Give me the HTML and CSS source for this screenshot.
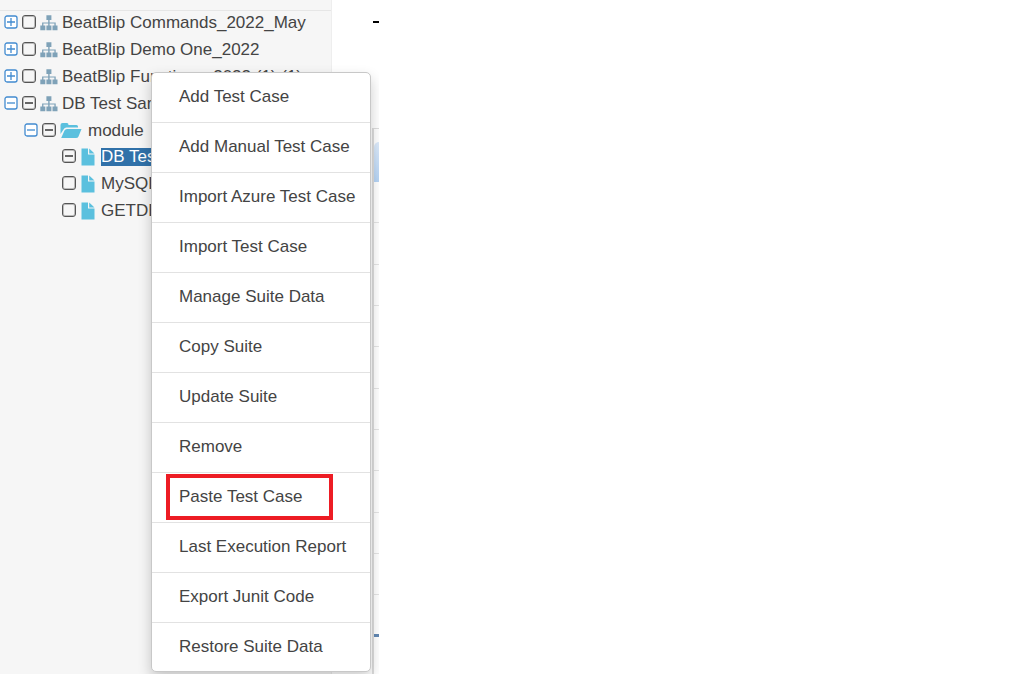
FILE: index.html
```html
<!DOCTYPE html>
<html lang="en">
<head>
<meta charset="utf-8">
<title>BeatBlip</title>
<link rel="stylesheet" href="styles.css">
</head>
<body>
<svg class="defs" aria-hidden="true">
  <symbol id="plus" viewBox="0 0 14 14"><rect x="1" y="1" width="12" height="12" rx="2"/><path d="M7 3v8M3 7h8"/></symbol>
  <symbol id="minus" viewBox="0 0 14 14"><rect x="1" y="1" width="12" height="12" rx="2"/><path d="M3 7h8"/></symbol>
  <symbol id="sitemap" viewBox="0 0 18 16"><path d="M6.4.3h5v4.8H9.600v2.300h6.100v3.200h1.800v4.700h-5v-4.700h1.900V8.500H9.600v2.100h1.800v4.700h-5v-4.700h1.800V8.500H3.400v2.100h1.900v4.700h-5v-4.700h1.800V7.400h6.100V5.100H6.400z"/></symbol>
  <symbol id="folder" viewBox="0 0 22 17"><path d="M.5 12V3Q.5 1 2.5 1H7Q8.500 1 8.500 3H16.500Q18 3 18 4.500V5.500H6.500Q4.500 5.500 3.500 7.500zM7 7H21.500L18.500 14.500Q17.800 16 16 16H1.200L4.500 8.500Q5.200 7 7 7z"/></symbol>
  <symbol id="file" viewBox="0 0 14 18"><path d="M.5.5H7V6.500H13.500V17.500H.5zM8.200.5L13.500 5.500H8.200z"/></symbol>
</svg>
<div class="app">
  <nav class="sidebar" aria-label="Projects">
    <div class="sidebar-head"></div>
    <ul class="tree">
      <li><div class="row"><button class="toggle" aria-label="Expand"><svg><use href="#plus"/></svg></button><label class="node"><input type="checkbox"><svg class="site"><use href="#sitemap"/></svg><span>BeatBlip Commands_2022_May</span></label></div></li>
      <li><div class="row"><button class="toggle" aria-label="Expand"><svg><use href="#plus"/></svg></button><label class="node"><input type="checkbox"><svg class="site"><use href="#sitemap"/></svg><span>BeatBlip Demo One_2022</span></label></div></li>
      <li><div class="row"><button class="toggle" aria-label="Expand"><svg><use href="#plus"/></svg></button><label class="node"><input type="checkbox"><svg class="site"><use href="#sitemap"/></svg><span>BeatBlip Functions_2022 (1) (1)</span></label></div></li>
      <li><div class="row"><button class="toggle" aria-label="Collapse"><svg><use href="#minus"/></svg></button><label class="node"><input class="partial" type="checkbox"><svg class="site"><use href="#sitemap"/></svg><span>DB Test Sample</span></label></div>
        <ul class="branch">
          <li><div class="row"><button class="toggle" aria-label="Collapse"><svg><use href="#minus"/></svg></button><label class="node"><input class="partial" type="checkbox"><svg class="folder"><use href="#folder"/></svg><span>module</span></label></div>
            <ul class="leaves">
              <li><div class="row"><label class="node"><input class="partial" type="checkbox"><svg class="file"><use href="#file"/></svg><span class="selected">DB Test</span></label></div></li>
              <li><div class="row"><label class="node"><input type="checkbox"><svg class="file"><use href="#file"/></svg><span>MySQL</span></label></div></li>
              <li><div class="row"><label class="node"><input type="checkbox"><svg class="file"><use href="#file"/></svg><span>GETDB</span></label></div></li>
            </ul>
          </li>
        </ul>
      </li>
    </ul>
  </nav>
  <main class="content">
    <div class="title-mark"></div>
    <div class="panel">
      <div class="tab"></div>
      <div class="line"></div><div class="line"></div><div class="line"></div><div class="line"></div><div class="line"></div>
      <div class="line"></div><div class="line"></div><div class="line"></div><div class="line"></div><div class="line"></div>
      <div class="line accent"></div>
    </div>
  </main>
  <div class="menu" role="menu">
    <button role="menuitem">Add Test Case</button>
    <button role="menuitem">Add Manual Test Case</button>
    <button role="menuitem">Import Azure Test Case</button>
    <button role="menuitem">Import Test Case</button>
    <button role="menuitem">Manage Suite Data</button>
    <button role="menuitem">Copy Suite</button>
    <button role="menuitem">Update Suite</button>
    <button role="menuitem">Remove</button>
    <button role="menuitem" class="marked">Paste Test Case</button>
    <button role="menuitem">Last Execution Report</button>
    <button role="menuitem">Export Junit Code</button>
    <button role="menuitem">Restore Suite Data</button>
  </div>
</div>
</body>
</html>
```
FILE: styles.css
```css
* { box-sizing: border-box; }
body { margin: 0; background: #fff; color: #444; font: 17px/27px "Liberation Sans", Arial, sans-serif; }
button { font: inherit; color: inherit; background: none; border: 0; padding: 0; }
ul { list-style: none; margin: 0; padding: 0; }
.defs { position: absolute; width: 0; height: 0; }
.app { position: relative; display: flex; width: 379px; min-height: 100vh; overflow: hidden; }
.sidebar { flex: 0 0 332px; background: #f6f6f6; border-right: 1px solid #eee; }
.sidebar-head { height: 11px; border-bottom: 1px solid #e6e6e6; }
.tree { padding-left: 4px; margin-top: -2px; }
.branch { padding-left: 20px; }
.leaves { padding-left: 38px; margin-top: -1px; }
.row { display: flex; align-items: center; gap: 4px; height: 27px; white-space: nowrap; }
.toggle { display: flex; color: #428bd0; }
.toggle svg { width: 14px; height: 14px; margin-bottom: 1px; fill: #fff; stroke: currentColor; stroke-width: 1.3; }
.node { display: flex; align-items: center; gap: 4px; }
.node input { appearance: none; display: grid; place-items: center; width: 14px; height: 14px; margin: 0 0 1px; border: 1px solid #555; border-radius: 3px; box-shadow: inset 0 0 0 1px #bbb; }
.node .partial::after { content: ""; width: 8px; height: 2px; background: #666; }
.site { width: 18px; height: 16px; fill: #7fa2b8; }
.folder { width: 22px; height: 17px; margin-right: 2px; fill: #5bc0de; }
.file { width: 14px; height: 18px; margin: 0 2px 0 1px; fill: #5bc0de; }
.selected { line-height: 18px; background: #3071a9; color: #fff; }
.content { flex: 1; display: flex; flex-direction: column; padding: 21px 0 0 40px; }
.title-mark { height: 2px; margin-left: 1px; background: #000; }
.panel { flex: 1; margin-top: 105px; border-top: 1px solid #ddd; border-left: 2px solid #ddd; }
.tab { height: 40px; margin-top: 13px; border-radius: 5px 0 0; background: linear-gradient(#dceafa, #b5d3f4); }
.line { height: 41px; border-bottom: 1px solid #e4e4e4; }
.line:nth-child(3n) { height: 42px; }
.accent { height: 43px; border-bottom: 3px solid #6288b3; }
.menu { position: absolute; top: 72px; left: 151px; width: 220px; display: flex; flex-direction: column; border: 1px solid #c8c8c8; border-radius: 5px; background: #fff; box-shadow: 0 6px 14px rgba(0,0,0,.2); }
.menu button { position: relative; height: 50px; padding: 0 0 2px 27px; border-bottom: 1px solid #e2e2e2; text-align: left; white-space: nowrap; }
.menu button:last-child { border-bottom: 0; height: 48px; }
.menu .marked::after { content: ""; position: absolute; inset: 1px 37px 2px 14px; border: 4px solid #ed1c24; }
```
